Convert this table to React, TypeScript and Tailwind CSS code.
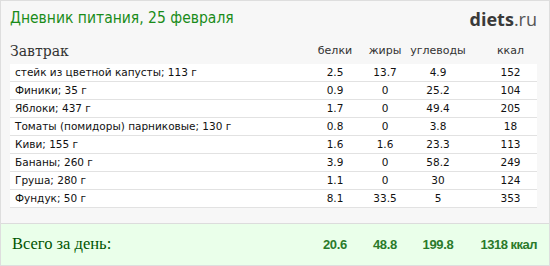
import React from "react";

const rows: [string, string, string, string, string][] = [
  ["стейк из цветной капусты; 113 г", "2.5", "13.7", "4.9", "152"],
  ["Финики; 35 г", "0.9", "0", "25.2", "104"],
  ["Яблоки; 437 г", "1.7", "0", "49.4", "205"],
  ["Томаты (помидоры) парниковые; 130 г", "0.8", "0", "3.8", "18"],
  ["Киви; 155 г", "1.6", "1.6", "23.3", "113"],
  ["Бананы; 260 г", "3.9", "0", "58.2", "249"],
  ["Груша; 280 г", "1.1", "0", "30", "124"],
  ["Фундук; 50 г", "8.1", "33.5", "5", "353"],
];

const grid = "grid grid-cols-[1fr_50px_50px_56px_71px] items-center";
const tot = { fontFamily: '"Liberation Sans", sans-serif' };

export default function App() {
  return (
    <div className="w-[550px] h-[266px] border border-[#dedede] bg-[#f7f7f7] flex flex-col overflow-hidden">
      <div className="flex items-start justify-between pl-[9px] pr-[12px] pt-[7px] h-[38px]">
        <div className="text-[15.5px] leading-[20px] text-[#1a8c1a]" style={{ fontFamily: '"DejaVu Sans Condensed", "DejaVu Sans", sans-serif', fontStretch: "condensed" }}>
          Дневник питания, 25 февраля
        </div>
        <div className="text-[18px] leading-[20px] text-[#3a3a3a] pt-[1px]" style={{ fontFamily: '"Open Sans", sans-serif' }}>
          <span className="font-bold">diets</span>
          <span className="text-[#555]">.ru</span>
        </div>
      </div>
      <div className="ml-[9px] mr-[12px]">
        <div className={`${grid} h-[25px] text-[11px] text-[#333]`} style={{ fontFamily: '"DejaVu Sans", sans-serif' }}>
          <div className="text-[14px] text-[#333]" style={{ fontFamily: '"DejaVu Serif", serif' }}>Завтрак</div>
          <div className="text-center">белки</div>
          <div className="text-center">жиры</div>
          <div className="text-center">углеводы</div>
          <div className="text-center pl-[18px]">ккал</div>
        </div>
        {rows.map((r, i) => (
          <div
            key={i}
            className={`${grid} h-[18px] bg-white border-b border-[#e2e2e2] text-[10.5px] text-[#111]`}
            style={{ fontFamily: '"DejaVu Sans", sans-serif' }}
          >
            <div className="pl-[5px] whitespace-nowrap">{r[0]}</div>
            <div className="text-center">{r[1]}</div>
            <div className="text-center">{r[2]}</div>
            <div className="text-center">{r[3]}</div>
            <div className="text-center pl-[18px]">{r[4]}</div>
          </div>
        ))}
      </div>
      <div className="mt-auto h-[42px] bg-[#eaffea] border-t border-[#dcdcdc]">
        <div className={`${grid} h-full ml-[9px] mr-[12px]`}>
          <div className="pl-[2px] text-[16.5px] text-[#005500]" style={{ fontFamily: '"Liberation Serif", serif' }}>
            Всего за день:
          </div>
          <div className="text-center font-bold text-[13px] text-[#2a7a2a] tracking-[-0.3px]" style={tot}>20.6</div>
          <div className="text-center font-bold text-[13px] text-[#2a7a2a] tracking-[-0.3px]" style={tot}>48.8</div>
          <div className="text-center font-bold text-[13px] text-[#2a7a2a] tracking-[-0.3px]" style={tot}>199.8</div>
          <div className="text-right font-bold text-[13px] text-[#2a7a2a] whitespace-nowrap tracking-[-0.5px]" style={tot}>1318 ккал</div>
        </div>
      </div>
    </div>
  );
}
